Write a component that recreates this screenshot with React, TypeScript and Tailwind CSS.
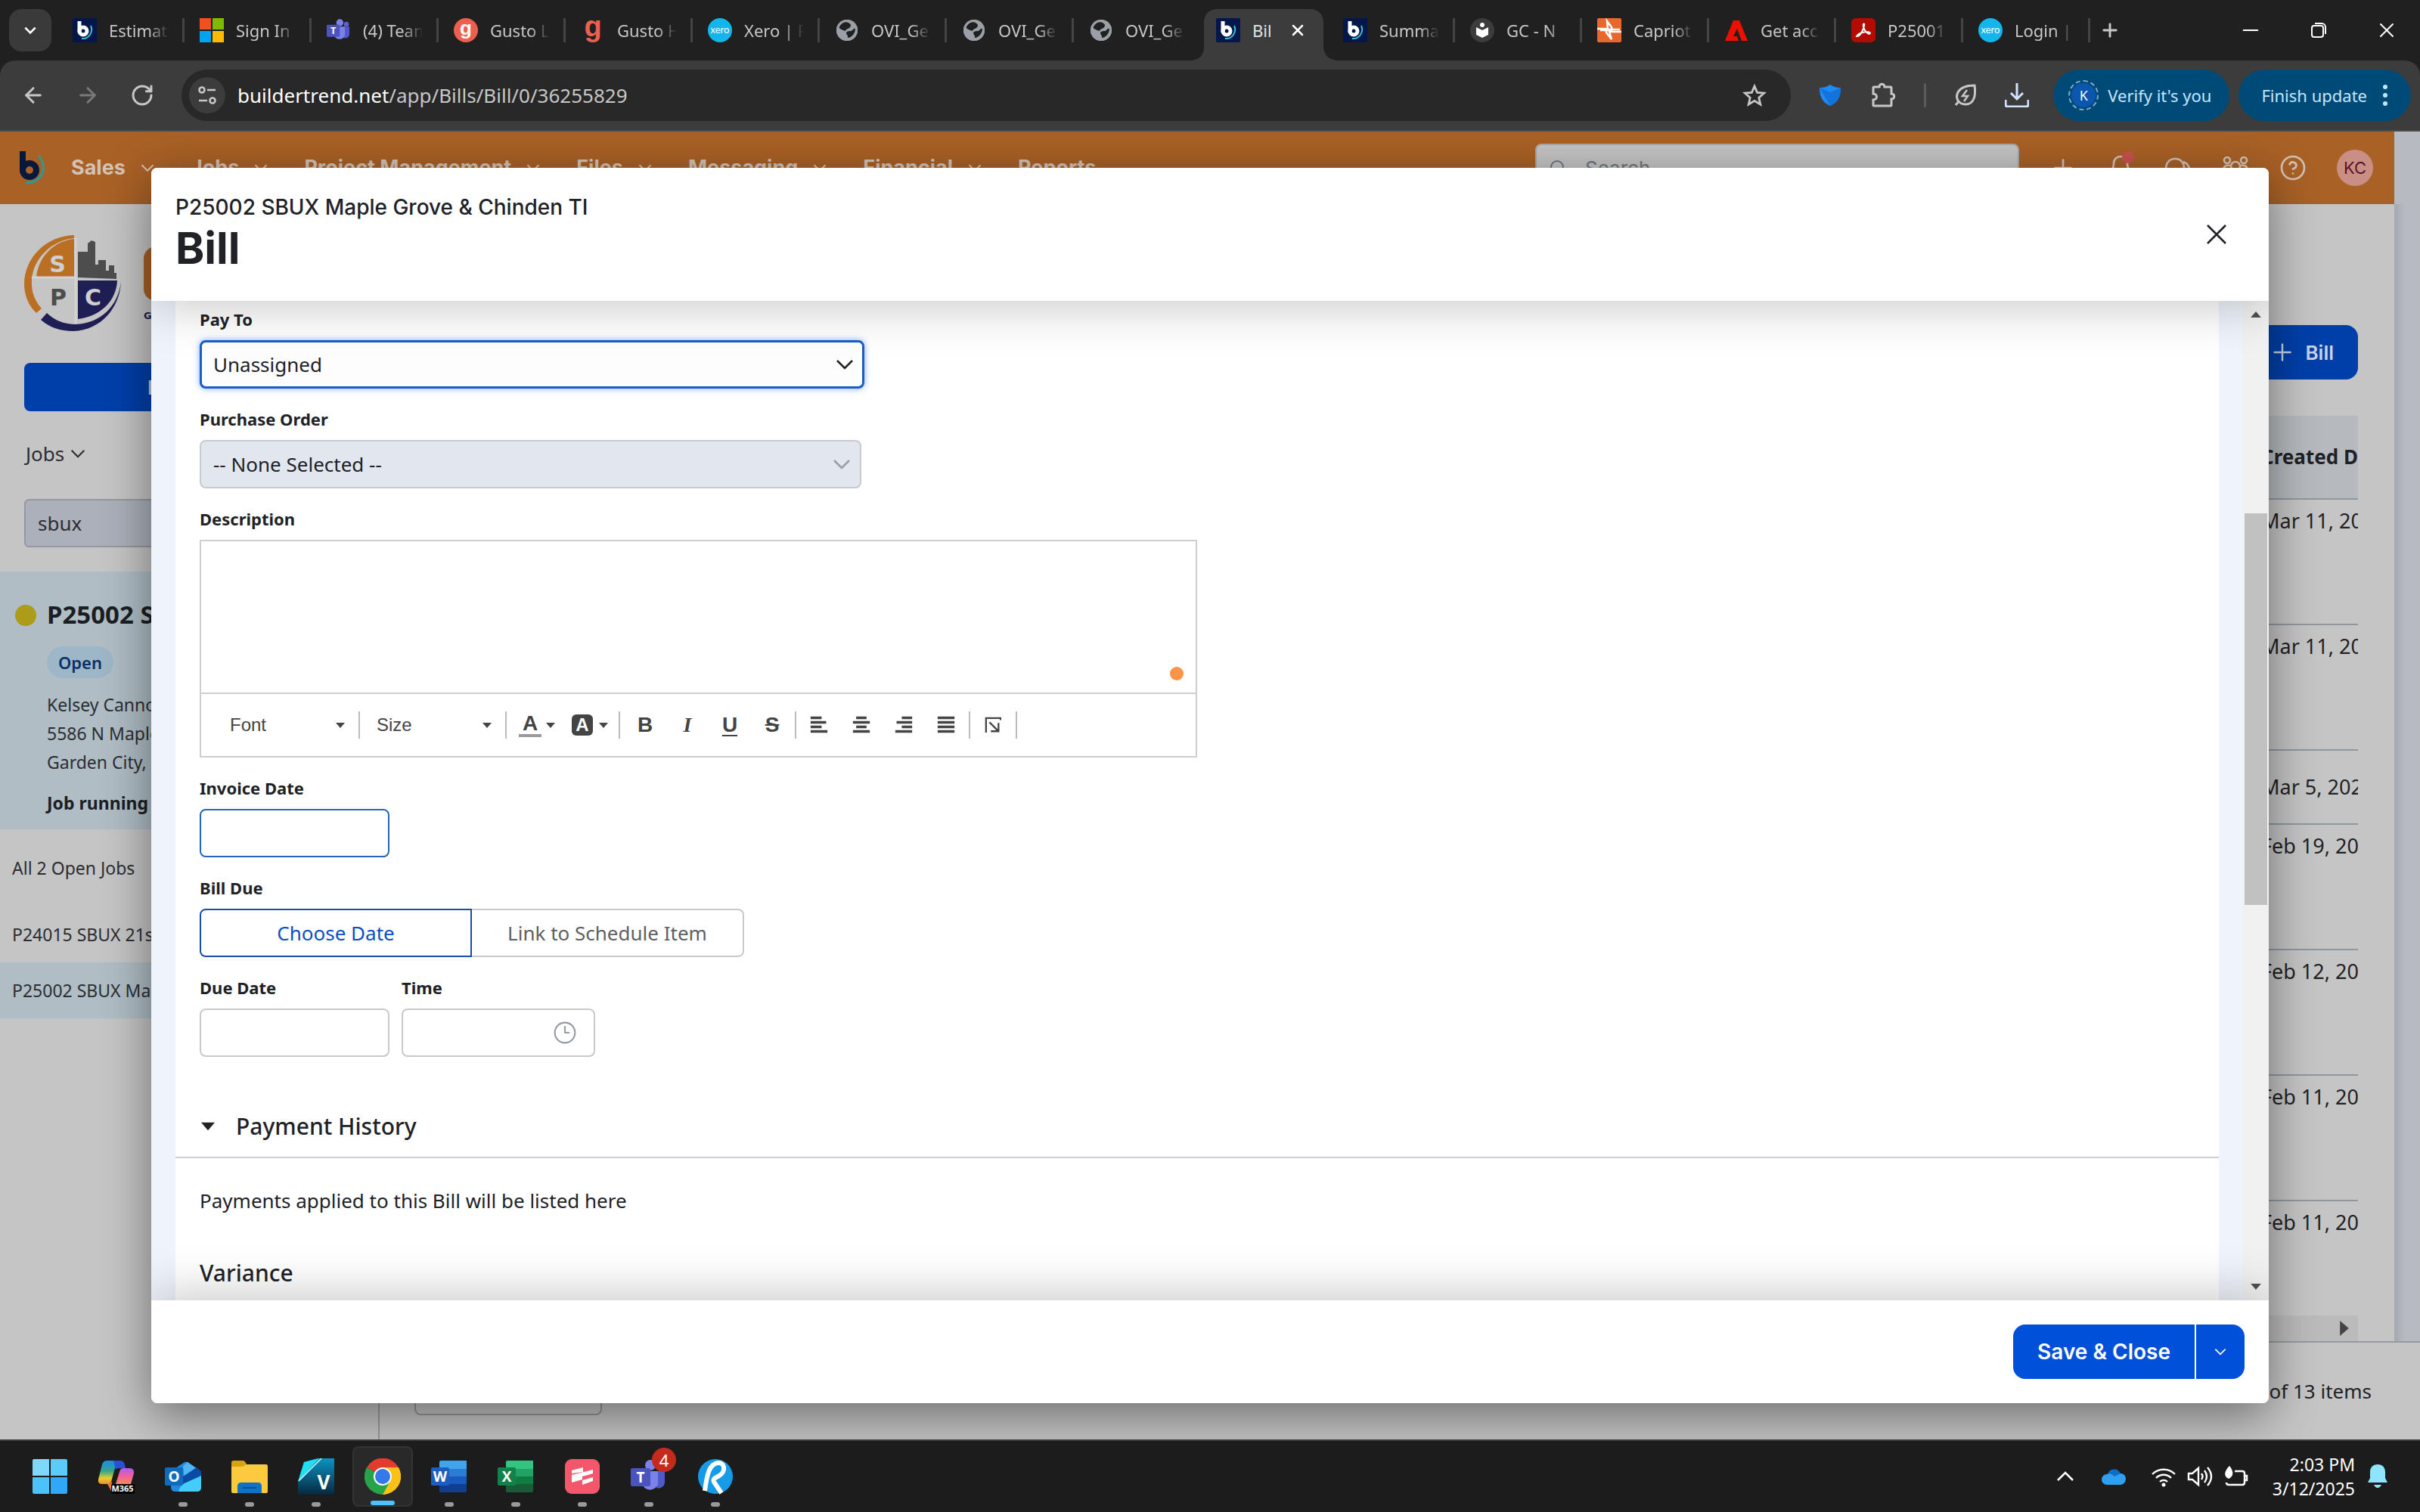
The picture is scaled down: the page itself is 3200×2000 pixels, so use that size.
import { useState } from "react";
import type { ReactNode } from "react";
import { ArrowLeft, ArrowRight, Bell, CircleHelp, Clock3, Minus, Plus, RotateCw, Search, X } from "lucide-react";

const Chevron = ({ className }: { className: string }) => (
	<svg viewBox="0 0 24 24" className={className} fill="none" stroke="currentColor" strokeWidth="2.6">
		<path d="M2 7l10 10L22 7" />
	</svg>
);

const Caret = ({ className }: { className: string }) => (
	<svg viewBox="0 0 12 7" className={className} fill="currentColor">
		<path d="M0 0h12L6 7z" />
	</svg>
);

/* ---------- browser tabs ---------- */

const BuilderIcon = () => (
	<svg viewBox="0 0 32 32" className="size-8">
		<rect width="32" height="32" rx="2" fill="#04174a" />
		<path d="M24 10a12 12 0 0 1-12 17" fill="none" stroke="#3ac0d8" strokeWidth="2" />
		<path d="M9 4v15" stroke="#fff" strokeWidth="5" />
		<circle cx="14" cy="17" r="5" fill="none" stroke="#fff" strokeWidth="5" />
	</svg>
);

const MicrosoftIcon = () => (
	<svg viewBox="0 0 32 32" className="size-8">
		<path fill="#f25022" d="M0 0h15v15H0z" />
		<path fill="#7fba00" d="M17 0h15v15H17z" />
		<path fill="#00a4ef" d="M0 17h15v15H0z" />
		<path fill="#ffb900" d="M17 17h15v15H17z" />
	</svg>
);

const TeamsIcon = ({ className }: { className: string }) => (
	<svg viewBox="0 0 48 48" className={className}>
		<circle cx="39" cy="12" r="5" fill="#5b62c9" />
		<circle cx="26" cy="9" r="7" fill="#7b83eb" />
		<path d="M32 17h13v15a8 8 0 0 1-11 7z" fill="#5059c9" />
		<path d="M15 17h21v17a11 11 0 0 1-21 0z" fill="#7b83eb" />
		<rect y="13" width="26" height="24" rx="2" fill="#4b53bc" />
		<text x="13" y="32" textAnchor="middle" fontSize="19" fontWeight="700" fontFamily="Open Sans, sans-serif" fill="#fff">T</text>
	</svg>
);

const GustoIcon = ({ plain }: { plain?: boolean }) => (
	<svg viewBox="0 0 32 32" className="size-8">
		{!plain && <circle cx="16" cy="16" r="16" fill="#ee5f50" />}
		<text
			x="16"
			y={plain ? 24 : 22}
			textAnchor="middle"
			fontSize={plain ? 38 : 26}
			fontWeight="700"
			fontFamily="Liberation Sans, sans-serif"
			fill={plain ? "#ee5f50" : "#fff"}
		>
			g
		</text>
	</svg>
);

const XeroIcon = () => (
	<svg viewBox="0 0 32 32" className="size-8">
		<circle cx="16" cy="16" r="16" fill="#13b5ea" />
		<text x="16" y="20" textAnchor="middle" fontSize="13" fontFamily="Lato, sans-serif" fill="#fff">xero</text>
	</svg>
);

const GlobeIcon = () => (
	<svg viewBox="0 0 32 32" className="size-8">
		<circle cx="16" cy="16" r="14" fill="#9aa0a6" />
		<path d="M14 5c7 1 9 5 5 8-3 2-4 1-5 4-3-1-7-2-9-5C6 8 9 5 14 5zM27 14c0 6-5 12-10 12 1-4-4-5-1-8 3-2 5 0 7-2 1-1 2-3 4-2z" fill="#202020" />
		<circle cx="16" cy="16" r="12.5" fill="none" stroke="#9aa0a6" strokeWidth="3" />
	</svg>
);

const ReaderIcon = () => (
	<svg viewBox="0 0 32 32" className="size-8">
		<circle cx="16" cy="16" r="16" fill="#3c3c3c" />
		<circle cx="16" cy="9" r="3" fill="#fff" />
		<path d="M8 12l8 4 8-4v10l-8 4-8-4z" fill="#fff" />
	</svg>
);

const CapriottiIcon = () => (
	<svg viewBox="0 0 32 32" className="size-8">
		<rect width="32" height="32" rx="2" fill="#e8672c" />
		<path d="M0 14h14L13 4l6 8v4H4M32 18H16l3 10-7-9v-4h18" fill="none" stroke="#fff" strokeWidth="2.5" />
	</svg>
);

const AdobeIcon = () => (
	<svg viewBox="0 0 32 32" className="size-8">
		<path d="M12 3h8l11 27h-8l-6-16-5 10h5l2 6H1z" fill="#eb1000" />
	</svg>
);

const AcrobatIcon = () => (
	<svg viewBox="0 0 32 32" className="size-8">
		<rect width="32" height="32" rx="6" fill="#b30b00" />
		<path d="M7 24c2-4 7-5 12-6 3 0 6 0 6 2-2 3-8-3-9-9-1-4 2-5 1-1-1 6-6 15-10 14z" fill="none" stroke="#fff" strokeWidth="2" />
	</svg>
);

const tabs: { title: string; icon: ReactNode; active?: boolean }[] = [
	{ title: "Estimate", icon: <BuilderIcon /> },
	{ title: "Sign In", icon: <MicrosoftIcon /> },
	{ title: "(4) Team", icon: <TeamsIcon className="size-8" /> },
	{ title: "Gusto L", icon: <GustoIcon /> },
	{ title: "Gusto H", icon: <GustoIcon plain /> },
	{ title: "Xero | P", icon: <XeroIcon /> },
	{ title: "OVI_Ge", icon: <GlobeIcon /> },
	{ title: "OVI_Ge", icon: <GlobeIcon /> },
	{ title: "OVI_Ge", icon: <GlobeIcon /> },
	{ title: "Bill", icon: <BuilderIcon />, active: true },
	{ title: "Summa", icon: <BuilderIcon /> },
	{ title: "GC - N", icon: <ReaderIcon /> },
	{ title: "Capriot", icon: <CapriottiIcon /> },
	{ title: "Get acc", icon: <AdobeIcon /> },
	{ title: "P25001", icon: <AcrobatIcon /> },
	{ title: "Login |", icon: <XeroIcon /> },
];

function TabStrip() {
	return (
		<div className="flex h-20 shrink-0 items-center bg-[#202020] pl-3 text-[#c7c7c7]">
			<button className="flex h-14 w-14 items-center justify-center rounded-2xl bg-[#3a3a3a]" aria-label="Search tabs">
				<Chevron className="size-4 stroke-[4] text-white" />
			</button>
			<div className="flex h-full flex-1 items-end pl-3">
				{tabs.map((tab, i) => (
					<div
						key={i}
						className={`relative flex h-[68px] w-[168px] items-center gap-4 pr-4 pb-3 pl-4 ${tab.active ? "z-10" : ""}`}
					>
						{tab.active && (
							<svg viewBox="0 0 200 68" className="absolute top-0 -left-5 h-[68px] w-[200px]">
								<path d="M0 68c16 0 20-8 20-20V18C20 8 26 0 38 0h122c12 0 18 8 18 18v30c0 12 6 20 22 20z" fill="#3c3c3c" />
							</svg>
						)}
						<span className="relative shrink-0">{tab.icon}</span>
						{tab.active ? (
							<>
								<span className="relative w-6 overflow-hidden text-[22px] leading-8 whitespace-nowrap text-[#e3e3e3]">{tab.title}</span>
								<button className="relative ml-2" aria-label="Close tab">
									<X className="size-6 text-white" strokeWidth={2.5} />
								</button>
							</>
						) : (
							<span className="flex-1 overflow-hidden [mask-image:linear-gradient(to_right,black_60%,transparent_90%)] text-[22px] leading-8 whitespace-nowrap">
								{tab.title}
							</span>
						)}
						{!tab.active && i !== 8 && <span className="absolute top-3 right-1 h-8 w-[3px] bg-[#444444]" />}
					</div>
				))}
				<button className="mb-[26px] ml-2" aria-label="New tab">
					<Plus className="size-7" strokeWidth={2.5} />
				</button>
			</div>
			<div className="flex items-center gap-16 pr-7 text-white">
				<button aria-label="Minimize">
					<Minus className="size-8" strokeWidth={1.5} />
				</button>
				<button aria-label="Restore">
					<svg viewBox="0 0 20 20" className="size-5" fill="none" stroke="currentColor" strokeWidth="2">
						<rect x="1" y="4" width="15" height="15" rx="3" />
						<path d="M5 1h9a5 5 0 0 1 5 5v9" />
					</svg>
				</button>
				<button aria-label="Close">
					<X className="size-8" strokeWidth={1.5} />
				</button>
			</div>
		</div>
	);
}

function AddressBar() {
	return (
		<div className="shrink-0 bg-[#202020]">
			<div className="flex h-[94px] items-center rounded-t-[20px] border-b-2 border-[#4b4b4b] bg-[#3c3c3c] pr-3 pl-7 text-[#c7c7c7]">
				<div className="flex gap-10">
					<button aria-label="Back">
						<ArrowLeft className="size-8" strokeWidth={2.2} />
					</button>
					<button aria-label="Forward" className="text-[#7a7a7a]">
						<ArrowRight className="size-8" strokeWidth={2.2} />
					</button>
					<button aria-label="Reload">
						<RotateCw className="size-8" strokeWidth={2.2} />
					</button>
				</div>
				<div className="ml-9 flex h-[68px] flex-1 items-center rounded-full bg-[#282828] pr-8 pl-[10px]">
					<button aria-label="Site information" className="flex size-12 items-center justify-center rounded-full bg-[#3c3c3c]">
						<svg viewBox="0 0 24 24" className="size-6" fill="none" stroke="currentColor" strokeWidth="2.6">
							<circle cx="5" cy="5" r="3.5" />
							<circle cx="19" cy="19" r="3.5" />
							<path d="M12 5h11M1 19h11" />
						</svg>
					</button>
					<p className="ml-4 flex-1 text-[26px]">
						<span className="text-white">buildertrend.net</span>/app/Bills/Bill/0/36255829
					</p>
					<button aria-label="Bookmark">
						<svg viewBox="0 0 32 32" className="size-8" fill="none" stroke="currentColor" strokeWidth="2.8">
							<path d="M16 4l3.600 8.400 9 .8-6.800 6 2 8.800-7.800-4.700L8.200 28l2-8.800-6.800-6 9-.8z" />
						</svg>
					</button>
				</div>
				<div className="ml-9 flex items-center gap-9">
					<svg viewBox="0 0 30 28" className="h-7 w-8">
						<path d="M1 4c6 0 9-1 14-4 5 3 8 4 14 4 0 11-3 19-14 24C4 23 1 15 1 4z" fill="#1d8bf8" />
						<path d="M1 4l14 6 14-6c0 11-3 19-14 24z" fill="#1273dc" />
					</svg>
					<svg viewBox="0 0 36 36" className="size-9" fill="none" stroke="currentColor" strokeWidth="3">
						<path d="M5 8q0-1 1-1h7c0-5 7-5 7 0h8q1 0 1 1v8c5 0 5 7 0 7v8q0 1-1 1H6q-1 0-1-1v-7c6 0 6-8 0-8z" />
					</svg>
					<span className="h-8 w-[3px] rounded bg-[#5c5c5c]" />
					<svg viewBox="0 0 32 32" className="size-8" fill="none" stroke="currentColor" strokeWidth="3">
						<path d="M28 3c2 14-1 25-12 25C7 28 2 20 6 12c4-7 12-9 22-9zM7 24l-4 5" />
						<path d="M18 9l-6 8h7l-5 7" strokeWidth="2.5" />
					</svg>
					<svg viewBox="0 0 32 32" className="size-8 text-[#d3e3fd]" fill="none" stroke="currentColor" strokeWidth="3">
						<path d="M16 0v20M8 13l8 8 8-8M1 22v6q0 3 3 3h24q3 0 3-3v-6" />
					</svg>
				</div>
				<button className="ml-8 flex h-[68px] items-center gap-3 rounded-full bg-[#004a77] pr-6 pl-5 text-[22px] text-[#c2e7ff]">
					<span className="flex size-10 items-center justify-center rounded-full border-2 border-dashed border-[#7fa9c6]">
						<span className="flex size-8 items-center justify-center rounded-full bg-[#0b57b0] text-[18px] text-white">K</span>
					</span>
					Verify it&apos;s you
				</button>
				<button className="ml-3 flex h-[68px] items-center gap-5 rounded-full bg-[#004a77] pr-[30px] pl-[30px] text-[22px] text-[#c2e7ff]">
					Finish update
					<svg viewBox="0 0 8 28" className="h-7 w-2" fill="currentColor">
						<circle cx="4" cy="3" r="3" />
						<circle cx="4" cy="14" r="3" />
						<circle cx="4" cy="25" r="3" />
					</svg>
				</button>
			</div>
		</div>
	);
}

/* ---------- page behind the dialog ---------- */

const navItems = ["Sales", "Jobs", "Project Management", "Files", "Messaging", "Financial", "Reports"];

function AppHeader() {
	return (
		<header className="flex h-24 flex-1 items-center bg-[#a96126] pr-7 pl-6 font-['Inter',sans-serif] text-[#d3c3b7]">
			<svg viewBox="0 0 38 44" className="h-11 w-[38px]">
				<path d="M6 0v26" stroke="#06183b" strokeWidth="8" />
				<circle cx="15" cy="25" r="9" fill="none" stroke="#06183b" strokeWidth="8" />
				<path d="M27 6c12 14 7 35-17 36" fill="none" stroke="#2b9a94" strokeWidth="3" />
			</svg>
			<nav className="ml-8 flex gap-12 text-[27px] font-bold">
				{navItems.map((item) => (
					<a key={item} href="#" className="flex items-center gap-5">
						{item}
						{item !== "Reports" && <Chevron className="size-[18px]" />}
					</a>
				))}
			</nav>
			<label className="ml-auto flex h-16 w-[640px] items-center gap-6 rounded-lg border-2 border-[#a8a8a8] bg-[#c4c4c4] px-4 text-[#6f777e]">
				<Search className="size-6" strokeWidth={2} />
				<input className="min-w-0 flex-1 bg-transparent text-[26px] placeholder:text-[#6f777e]" placeholder="Search" aria-label="Search" />
			</label>
			<div className="ml-10 flex items-center gap-10">
				<Plus className="size-9" strokeWidth={1.8} />
				<span className="relative">
					<Bell className="size-9" strokeWidth={1.8} />
					<span className="absolute -top-1 right-0 size-4 rounded-full bg-[#c9524f]" />
				</span>
				<svg viewBox="0 0 36 36" className="size-9" fill="none" stroke="currentColor" strokeWidth="2.6">
					<path d="M4 26c-5-11 1-20 10-20s14 8 11 15-10 9-16 7l-7 2z" />
					<path d="M25 10c8 3 10 11 6 17l2 5-7-2" />
				</svg>
				<svg viewBox="0 0 36 36" className="size-9" fill="none" stroke="currentColor" strokeWidth="2.6">
					<circle cx="7" cy="8" r="4" />
					<circle cx="29" cy="8" r="4" />
					<circle cx="18" cy="16" r="6" />
					<path d="M2 22c0-6 3-8 9-7M34 22c0-6-3-8-9-7M7 33c0-14 22-14 22 0z" />
				</svg>
				<CircleHelp className="size-9" strokeWidth={1.8} />
				<span className="flex size-12 items-center justify-center rounded-full bg-[#c98f85] text-[22px] text-[#5c1226]">KC</span>
			</div>
		</header>
	);
}

const SpcLogo = () => (
	<svg viewBox="0 0 130 128" className="h-32 w-[130px] shrink-0">
		<path d="M66 1C28 2 0 32 0 66c0 14 6 29 16 38l7-6C14 88 9 76 10 60 12 32 36 8 66 5z" fill="#bb6f22" />
		<path d="M66 6v51H16C18 30 40 8 66 6z" fill="#bb6f22" />
		<path d="M71 57V23h13V12l5-4 5 2v30h4v-6h10v14h4v-7h7v10h3v8z" fill="#4d4d4d" />
		<path d="M71 61h52c-1 28-24 48-52 51z" fill="#201f55" />
		<path d="M30 104l-8 9c11 10 26 15 43 15 37-1 62-32 63-66-3 32-27 56-60 57-14 0-28-5-38-15z" fill="#201f55" />
		<path d="M10 57h58M68 5v113" stroke="#d3d3d3" strokeWidth="3" />
		<g fontFamily="DejaVu Sans, sans-serif" fontWeight="700" fontSize="30" textAnchor="middle">
			<text x="44" y="50" fill="#d0d0d0">S</text>
			<text x="45" y="94" fill="#4d4d4d">P</text>
			<text x="91" y="94" fill="#d0d0d0">C</text>
		</g>
	</svg>
);

function Sidebar() {
	return (
		<aside className="flex w-[502px] shrink-0 flex-col border-r-2 border-[#9a9a9a] text-[23px] text-[#2b2e32]">
			<div className="flex gap-7 pt-10 pl-8">
				<SpcLogo />
				<div className="flex-1 pt-4">
					<div className="h-[72px] rounded-l-2xl bg-[#a96126]" />
					<p className="mt-3 font-['DejaVu_Sans',sans-serif] text-[13px] leading-4 font-bold text-[#201f55]">GENERAL CONTRACTING</p>
				</div>
			</div>
			<button className="mx-8 mt-[42px] h-16 rounded-lg bg-[#003fa9] font-['Inter',sans-serif] text-[26px] font-semibold text-[#c5cfe0]">
				New Job
			</button>
			<button className="mt-[38px] ml-[34px] flex items-center gap-2 text-[26px] leading-9">
				Jobs
				<Chevron className="size-5" />
			</button>
			<input
				className="mx-8 mt-[42px] h-16 rounded-md border-2 border-[#95989e] bg-[#abb0ba] px-4 text-[26px]"
				defaultValue="sbux"
				aria-label="Filter jobs"
			/>
			<section className="mt-8 flex gap-[14px] bg-[#b0bdc5] pt-[34px] pb-4 pl-5">
				<span className="mt-[10px] size-7 shrink-0 rounded-full bg-[#ac9c1a]" />
				<div>
					<h2 className="text-[33px] leading-[46px] font-bold whitespace-nowrap text-[#1b1f24]">P25002 SBUX Maple Grove</h2>
					<span className="mt-[19px] inline-block rounded-full bg-[#9db7c8] px-[15px] text-[22px] leading-[42px] font-semibold text-[#0a2f66]">
						Open
					</span>
					<p className="mt-4 leading-[38px] whitespace-pre-line">{"Kelsey Cannon\n5586 N Maple Grove Rd\nGarden City, ID 83714"}</p>
					<p className="mt-4 leading-[38px] font-bold text-[#1b1f24]">Job running total</p>
				</div>
			</section>
			<p className="mt-8 pl-4 leading-[38px]">All 2 Open Jobs</p>
			<a href="#" className="mt-8 pl-4 leading-[74px] whitespace-nowrap">
				P24015 SBUX 21st Street
			</a>
			<a href="#" className="bg-[#b0bdc5] pl-4 leading-[74px] whitespace-nowrap">
				P25002 SBUX Maple Grove
			</a>
		</aside>
	);
}

const createdDates = [
	"Mar 11, 2025",
	"Mar 11, 2025",
	"Mar 5, 2025",
	"Feb 19, 2025",
	"Feb 12, 2025",
	"Feb 11, 2025",
	"Feb 11, 2025",
];

function BillsPage() {
	return (
		<div className="flex h-full flex-col bg-[#c5c5c5]">
			<div className="flex shrink-0">
				<AppHeader />
				<div className="w-[34px] bg-[#b7bac0]" />
			</div>
			<div className="flex min-h-0 flex-1">
				<Sidebar />
				<main className="flex min-w-0 flex-1 flex-col text-[26px] text-[#1f2226]">
					<div className="flex min-h-0 flex-1">
						<div className="flex min-w-0 flex-1 flex-col px-12 pt-40">
							<button className="flex h-[72px] items-center gap-3 self-end rounded-2xl bg-[#003fa9] px-8 font-['Inter',sans-serif] text-[26px] font-semibold text-[#c9d3e6]">
								<Plus className="size-9" strokeWidth={1.6} />
								Bill
							</button>
							<div className="mt-12 min-h-0 flex-1 overflow-hidden">
								<table className="w-full table-fixed">
									<thead>
										<tr className="h-[110px] border-b-2 border-[#8f979f] bg-[#b6babe]">
											<th />
											<th className="w-[128px] overflow-hidden text-left whitespace-nowrap">Created Date</th>
										</tr>
									</thead>
									<tbody>
										{createdDates.map((date, i) => {
											const single = date.startsWith("Mar 5");
											return (
												<tr key={i} className={`border-b-2 border-[#8f979f] ${single ? "h-[98px]" : "h-[166px] align-top"}`}>
													<td />
													<td className={`overflow-hidden text-[27px] leading-9 whitespace-nowrap ${single ? "" : "pt-[10px]"}`}>{date}</td>
												</tr>
											);
										})}
									</tbody>
								</table>
							</div>
							<div className="flex h-[34px] shrink-0 items-center justify-end bg-[#bbbbbb] pr-2">
								<Caret className="h-3 w-5 -rotate-90 text-[#444444]" />
							</div>
						</div>
						<div className="w-[34px] bg-linear-to-r from-[#a4a8b1] to-[#b7bac0] to-40%" />
					</div>
					<footer className="flex h-[130px] shrink-0 items-center justify-between border-t-2 border-[#959ba3] pr-16 pl-[46px]">
						<select className="mb-8 h-16 w-[248px] appearance-none self-end rounded-lg border-2 border-[#959595] px-4" aria-label="Page size">
							<option>50 per page</option>
						</select>
						<span>1-13 of 13 items</span>
					</footer>
				</main>
			</div>
		</div>
	);
}

/* ---------- bill dialog ---------- */

const labelClass = "mb-3 block text-[22px] leading-8 font-bold text-[#202227]";
const fieldClass = "h-16 rounded-lg border-2 border-[#c9c9cb] bg-white px-4 text-[26px] text-[#202227] outline-none";

function EditorToolbar() {
	const glyph = "flex h-11 w-14 items-center justify-center text-[28px] leading-none font-bold";
	const lines = [
		["Align left", "M1 3h17M1 10h24M1 17h17M1 24h26"],
		["Align center", "M6 3h16M1 10h26M6 17h16M1 24h26"],
		["Align right", "M11 3h16M3 10h24M11 17h16M1 24h26"],
		["Justify", "M1 3h26M1 10h26M1 17h26M1 24h26"],
	];
	return (
		<div className="flex h-[84px] items-center border-t-2 border-[#cfcfcf] pl-[38px] font-['Liberation_Sans',sans-serif] text-[24px] text-[#444444]">
			<button type="button" className="flex w-[152px] items-center justify-between">
				Font
				<Caret className="w-3" />
			</button>
			<span className="mr-[22px] ml-[18px] h-9 w-[2px] bg-[#bcbcbc]" />
			<button type="button" className="flex w-[152px] items-center justify-between">
				Size
				<Caret className="w-3" />
			</button>
			<span className="mr-4 ml-[18px] h-9 w-[2px] bg-[#bcbcbc]" />
			<button type="button" className="flex items-center gap-[6px]" aria-label="Text color">
				<span className="w-[30px] border-b-4 border-[#9b9b9b] text-center text-[28px] leading-[28px] font-bold">A</span>
				<Caret className="w-3" />
			</button>
			<button type="button" className="ml-[22px] flex items-center gap-2" aria-label="Highlight color">
				<span className="flex size-7 items-center justify-center rounded-md bg-[#444444] text-[24px] leading-none font-bold text-white">A</span>
				<Caret className="w-3" />
			</button>
			<span className="mr-[5px] ml-[14px] h-9 w-[2px] bg-[#bcbcbc]" />
			<button type="button" className={glyph} aria-label="Bold">B</button>
			<button type="button" className={`${glyph} font-['Liberation_Serif',serif] italic`} aria-label="Italic">I</button>
			<button type="button" className={`${glyph} underline underline-offset-4`} aria-label="Underline">U</button>
			<button type="button" className={`${glyph} line-through`} aria-label="Strikethrough">S</button>
			<span className="mx-[2px] h-9 w-[2px] bg-[#bcbcbc]" />
			{lines.map(([name, d]) => (
				<button type="button" key={name} className={glyph} aria-label={name}>
					<svg viewBox="0 0 28 27" className="w-6" stroke="currentColor" strokeWidth="4">
						<path d={d} />
					</svg>
				</button>
			))}
			<span className="mx-[2px] h-9 w-[2px] bg-[#bcbcbc]" />
			<button type="button" className={glyph} aria-label="Insert">
				<svg viewBox="0 0 24 24" className="size-[22px]" fill="none" stroke="currentColor" strokeWidth="2.5">
					<path d="M2 23V2h21v3M7 8l12 12M20 9v12H9" />
				</svg>
			</button>
			<span className="mx-[2px] h-9 w-[2px] bg-[#bcbcbc]" />
		</div>
	);
}

function BillForm() {
	const [dueMode, setDueMode] = useState("date");
	return (
		<form className="min-w-0 flex-1 bg-white pt-2">
			<div className="flex flex-col gap-6 pl-8">
				<div>
					<label htmlFor="payTo" className={labelClass}>Pay To</label>
					<div className="relative w-[879px]">
						<select
							id="payTo"
							className="h-16 w-full appearance-none rounded-lg border-[3px] border-[#1a5dc4] bg-[#fdfdfd] px-[15px] text-[26px] text-[#202227] shadow-[0_0_8px_rgba(0,90,255,0.5)] outline-none"
						>
							<option>Unassigned</option>
						</select>
						<Chevron className="pointer-events-none absolute top-5 right-[14px] size-6 text-[#202227]" />
					</div>
				</div>
				<div>
					<label htmlFor="purchaseOrder" className={labelClass}>Purchase Order</label>
					<div className="relative w-[875px]">
						<select
							id="purchaseOrder"
							disabled
							className="h-16 w-full appearance-none rounded-lg border-2 border-[#c8cacf] bg-[#e1e6ef] px-4 text-[26px] text-[#202227] opacity-100"
						>
							<option>-- None Selected --</option>
						</select>
						<Chevron className="pointer-events-none absolute top-5 right-[14px] size-6 text-[#9a9da3]" />
					</div>
				</div>
				<div>
					<label htmlFor="description" className={labelClass}>Description</label>
					<div className="w-[1319px] border-2 border-[#cfcfcf]">
						<div className="relative">
							<textarea id="description" className="block h-[200px] w-full resize-none p-4 text-[26px] outline-none" />
							<span className="absolute right-4 bottom-4 size-[18px] rounded-full bg-[#fa9449]" />
						</div>
						<EditorToolbar />
					</div>
				</div>
				<div>
					<label htmlFor="invoiceDate" className={labelClass}>Invoice Date</label>
					<input id="invoiceDate" className="h-16 w-[251px] rounded-lg border-2 border-[#2565bd] px-4 text-[26px] outline-none" />
				</div>
				<fieldset>
					<legend className={labelClass}>Bill Due</legend>
					<div className="flex text-[26px] text-[#5f6063]">
						<label className="flex h-16 w-[360px] items-center justify-center rounded-l-lg border-2 border-[#c9c9cb] has-checked:border-[#164fa8] has-checked:text-[#0b4fc4]">
							<input type="radio" name="due" className="sr-only" checked={dueMode === "date"} onChange={() => setDueMode("date")} />
							Choose Date
						</label>
						<label className="flex h-16 w-[360px] items-center justify-center rounded-r-lg border-2 border-l-0 border-[#c9c9cb] has-checked:border-[#164fa8] has-checked:text-[#0b4fc4]">
							<input type="radio" name="due" className="sr-only" checked={dueMode === "schedule"} onChange={() => setDueMode("schedule")} />
							Link to Schedule Item
						</label>
					</div>
				</fieldset>
				<div className="flex gap-4">
					<div>
						<label htmlFor="dueDate" className={labelClass}>Due Date</label>
						<input id="dueDate" className={`${fieldClass} w-[251px]`} />
					</div>
					<div>
						<label htmlFor="dueTime" className={labelClass}>Time</label>
						<div className="relative">
							<input id="dueTime" className={`${fieldClass} w-[256px]`} />
							<Clock3 className="pointer-events-none absolute top-4 right-6 size-8 text-[#979ca4]" strokeWidth={1.6} />
						</div>
					</div>
				</div>
			</div>
			<h2 className="mt-[50px] border-b-2 border-[#ccd0d4] pt-[22px] pb-5 pl-[34px] text-[30px] leading-10 font-medium text-[#202227]">
				<button type="button" className="flex items-center gap-7">
					<Caret className="h-3 w-[18px]" />
					Payment History
				</button>
			</h2>
			<p className="mt-9 pl-8 text-[26px] leading-10 text-[#202227]">Payments applied to this Bill will be listed here</p>
			<h3 className="mt-14 pl-8 text-[30px] leading-10 font-medium text-[#202227]">Variance</h3>
		</form>
	);
}

function BillDialog() {
	return (
		<div
			role="dialog"
			aria-label="Bill"
			className="absolute inset-x-[200px] inset-y-12 flex flex-col overflow-hidden rounded-lg bg-white shadow-[0_16px_64px_rgba(0,0,0,0.45)]"
		>
			<header className="relative z-10 flex h-44 shrink-0 justify-between bg-white pr-14 pl-8 font-['Inter',sans-serif] text-[#202227] shadow-[0_8px_64px_rgba(0,0,0,0.22)]">
				<div className="pt-8">
					<p className="text-[28px] leading-10 font-medium">P25002 SBUX Maple Grove &amp; Chinden TI</p>
					<h1 className="text-[58px] leading-[68px] font-bold">Bill</h1>
				</div>
				<button aria-label="Close" className="self-center">
					<svg viewBox="0 0 26 26" className="size-[26px]" stroke="currentColor" strokeWidth="2.6">
						<path d="M1 1l24 24M25 1L1 25" />
					</svg>
				</button>
			</header>
			<div className="flex min-h-0 flex-1 overflow-hidden bg-[#eff3fb] pl-8">
				<BillForm />
				<div className="w-8" />
				<div className="flex w-[34px] flex-col items-center bg-[#f1f1f1] py-[14px]">
					<Caret className="h-2 w-4 rotate-180 text-[#505050]" />
					<div className="flex min-h-0 w-full flex-1 flex-col px-[2px] pt-[259px]">
						<div className="h-[518px] bg-[#c1c1c1]" />
					</div>
					<Caret className="h-2 w-4 text-[#505050]" />
				</div>
			</div>
			<footer className="relative z-10 flex h-[136px] shrink-0 items-center justify-end bg-white pr-8 font-['Inter',sans-serif] text-[28px] font-semibold text-white shadow-[0_-8px_64px_rgba(0,0,0,0.22)]">
				<button className="h-[72px] rounded-l-2xl bg-[#0050d9] px-8">Save &amp; Close</button>
				<button aria-label="More save options" className="ml-[2px] flex h-[72px] w-16 items-center justify-center rounded-r-2xl bg-[#0050d9]">
					<Chevron className="size-4" />
				</button>
			</footer>
		</div>
	);
}

/* ---------- taskbar ---------- */

const OfficeIcon = ({ letter, colors }: { letter: string; colors: string[] }) => (
	<svg viewBox="0 0 48 48" className="size-12">
		<path d="M11 5q0-2 2-2h34v11H11z" fill={colors[0]} />
		<path d="M11 14h36v10H11z" fill={colors[1]} />
		<path d="M11 24h36v10H11z" fill={colors[2]} />
		<path d="M11 34h36v9q0 2-2 2H13q-2 0-2-2z" fill={colors[3]} />
		<rect y="12" width="24" height="24" rx="2" fill={colors[4]} />
		<text x="12" y="31" textAnchor="middle" fontSize="19" fontWeight="700" fontFamily="Open Sans, sans-serif" fill="#fff">{letter}</text>
	</svg>
);

const taskbarApps: { name: string; icon: ReactNode; state?: "open" | "active" }[] = [
	{
		name: "Start",
		icon: (
			<svg viewBox="0 0 48 48" className="size-12">
				<path d="M1 3q0-2 2-2h20v22H1z" fill="#7fd8fb" />
				<path d="M25 1h20q2 0 2 2v20H25z" fill="#5ccbfa" />
				<path d="M1 25h22v22H3q-2 0-2-2z" fill="#4cc2fa" />
				<path d="M25 25h22v20q0 2-2 2H25z" fill="#2fa8f7" />
			</svg>
		),
	},
	{
		name: "Microsoft 365 Copilot",
		icon: (
			<svg viewBox="0 0 48 48" className="size-12">
				<defs>
					<linearGradient id="copilotLeft" x1="0" y1="0" x2="0" y2="1">
						<stop offset="0" stopColor="#1b8bea" />
						<stop offset="0.45" stopColor="#35a58a" />
						<stop offset="0.75" stopColor="#e8cf2c" />
						<stop offset="1" stopColor="#f28a2e" />
					</linearGradient>
					<linearGradient id="copilotRight" x1="0" y1="0" x2="0" y2="1">
						<stop offset="0" stopColor="#a95df0" />
						<stop offset="0.5" stopColor="#f0609a" />
						<stop offset="1" stopColor="#f58a5f" />
					</linearGradient>
				</defs>
				<path d="M11 3h16c-3 2-4 6-5 10l-5 18q-1 3-4 3H5q-6 0-5-6L5 8q2-5 6-5z" fill="url(#copilotLeft)" />
				<path d="M12 34q5 0 6-4v15z" fill="#f2743a" />
				<path d="M20 3h9c4 0 6 3 7 10h-7c-3 0-4 0-6 2-1-4-2-8-3-12z" fill="#2a50d8" />
				<path d="M33 13h9q6 1 5 7l-4 14H23l5-16q1-5 5-5z" fill="url(#copilotRight)" />
				<rect x="17" y="34" width="31" height="13" rx="2" fill="#000" />
				<text x="32" y="44" textAnchor="middle" fontSize="11" fontWeight="700" fontFamily="Open Sans, sans-serif" fill="#fff">M365</text>
			</svg>
		),
	},
	{
		name: "Outlook",
		state: "open",
		icon: (
			<svg viewBox="0 0 48 48" className="size-12">
				<path d="M8 17L26 5q2-1 4 0l16 11q2 1 2 4v18q0 6-6 6H14q-6 0-6-6z" fill="#2389dd" />
				<path d="M24 10l6-5 16 11-20 14z" fill="#4fb5f5" />
				<path d="M24 24l18-12 6 6v6L24 34z" fill="#0a4ba6" />
				<path d="M48 23v15q0 6-6 6H18q2-8 8-11z" fill="#45cdfa" />
				<rect y="12" width="24" height="24" rx="2" fill="#0f6cbd" />
				<text x="12" y="31" textAnchor="middle" fontSize="19" fontWeight="700" fontFamily="Open Sans, sans-serif" fill="#fff">O</text>
			</svg>
		),
	},
	{
		name: "File Explorer",
		state: "open",
		icon: (
			<svg viewBox="0 0 48 48" className="size-12">
				<path d="M0 6q0-3 3-3h12q3 0 5 5v8H0z" fill="#d9a20f" />
				<path d="M0 11h14q3 0 5-3h27q2 0 2 3v33q0 2-2 2H2q-2 0-2-2z" fill="#fdca3f" />
				<path d="M8 46V37q0-5 5-5h22q5 0 5 5v9z" fill="#1172c4" />
				<path d="M15 39h18" stroke="#0a4f94" strokeWidth="2" />
			</svg>
		),
	},
	{
		name: "Vectorworks",
		state: "open",
		icon: (
			<svg viewBox="0 0 48 48" className="size-12">
				<defs>
					<linearGradient id="vPanel" x1="0" y1="0" x2="0" y2="1">
						<stop offset="0" stopColor="#0b93c4" />
						<stop offset="1" stopColor="#07283f" />
					</linearGradient>
				</defs>
				<path d="M8 5L26 0h22v48H0V30z" fill="url(#vPanel)" />
				<path d="M8 5l20-5L0 31z" fill="#20dff2" />
				<path d="M31 0L1 30" stroke="#d9f8fc" strokeWidth="1.5" />
				<text x="34" y="41" textAnchor="middle" fontSize="26" fontWeight="700" fontFamily="Open Sans, sans-serif" fill="#fff">V</text>
			</svg>
		),
	},
	{
		name: "Chrome",
		state: "active",
		icon: (
			<svg viewBox="0 0 48 48" className="size-12">
				<path d="M24 24L3 12a24 24 0 0 1 42 0z" fill="#e33b2e" />
				<path d="M24 24l21-12a24 24 0 0 1-21 36z" fill="#fbc116" />
				<path d="M24 24L3 12a24 24 0 0 0 21 36l10-18z" fill="#27a349" />
				<path d="M24 12h21l-11 18z" fill="#fbc116" />
				<circle cx="24" cy="24" r="12" fill="#fff" />
				<circle cx="24" cy="24" r="10" fill="#3478ea" />
			</svg>
		),
	},
	{ name: "Word", state: "open", icon: <OfficeIcon letter="W" colors={["#41a5ee", "#2b7cd3", "#185abd", "#103f91", "#1d5cc0"]} /> },
	{ name: "Excel", state: "open", icon: <OfficeIcon letter="X" colors={["#33c481", "#21a366", "#107c41", "#185c37", "#14804a"]} /> },
	{
		name: "SketchUp",
		state: "open",
		icon: (
			<svg viewBox="0 0 48 48" className="size-12">
				<rect x="1" y="1" width="46" height="46" rx="9" fill="#f4566b" />
				<path d="M10 20v-4l15-4v6zM10 27v-5l28-7v5l-10 3zM24 35v-6l14-4v5zM10 27l14-4v5l-14 4z" fill="#fff" />
			</svg>
		),
	},
	{ name: "Teams", state: "open", icon: <TeamsIcon className="size-12" /> },
	{
		name: "Revu",
		state: "open",
		icon: (
			<svg viewBox="0 0 48 48" className="size-12">
				<circle cx="24" cy="24" r="23" fill="#159be8" />
				<path d="M10 43C13 20 16 8 27 6c10-1 11 12 2 17-4 3-9 3-7 8l10 15" fill="none" stroke="#fff" strokeWidth="6" />
			</svg>
		),
	},
];

function Taskbar() {
	return (
		<div className="flex h-24 shrink-0 items-center justify-between border-t-2 border-[#3b3b3b] bg-[#1c1c1c] pr-[42px] pl-[26px] text-white">
			<div className="flex gap-2">
				{taskbarApps.map((app) => (
					<button
						key={app.name}
						aria-label={app.name}
						className={`relative flex h-20 w-20 items-center justify-center rounded-lg ${app.state === "active" ? "border-2 border-[#333333] bg-[#292929]" : ""}`}
					>
						{app.icon}
						{app.state === "active" && <span className="absolute bottom-0 h-[6px] w-8 rounded-full bg-[#4cc2ff]" />}
						{app.state === "open" && <span className="absolute bottom-0 h-[6px] w-3 rounded-full bg-[#9a9a9a]" />}
						{app.name === "Teams" && (
							<span className="absolute top-[2px] right-1 flex size-8 items-center justify-center rounded-full bg-[#c42b1c] text-[22px] leading-none">4</span>
						)}
					</button>
				))}
			</div>
			<div className="flex items-center">
				<Chevron className="size-6 rotate-180" />
				<svg viewBox="0 0 32 22" className="ml-9 w-8">
					<path d="M8 8a9 9 0 0 1 17-1l-8 10H6z" fill="#0f6cc4" />
					<path d="M7 8c4-2 7 0 10 3l8-4c4 0 7 3 7 7s-3 8-7 8H7a7 7 0 0 1 0-14z" fill="#2f9ff0" />
				</svg>
				<svg viewBox="0 0 36 36" className="ml-8 w-9" fill="none" stroke="currentColor" strokeWidth="2.4">
					<path d="M3 15a21 21 0 0 1 30 0M8 20a14 14 0 0 1 20 0M13 25a7 7 0 0 1 10 0" />
					<circle cx="18" cy="29" r="2.5" fill="currentColor" stroke="none" />
				</svg>
				<svg viewBox="0 0 36 36" className="ml-3 w-9" fill="none" stroke="currentColor" strokeWidth="2.4">
					<path d="M3 14h5l8-7v22l-8-7H3zM20 14q3 4 0 8M24 10q6 8 0 16M28 6q10 12 0 24" />
				</svg>
				<svg viewBox="0 0 34 28" className="ml-3 w-[34px]" fill="none" stroke="currentColor" strokeWidth="2.5">
					<path d="M16 7h10q3 0 3 3v12q0 3-3 3H8q-3 0-3-3M30 13h2v6h-2" />
					<path d="M9 0c6 7 6 14-1 17-7-3-6-10 1-17zM2 22l5-6" fill="currentColor" stroke="none" />
				</svg>
				<div className="ml-8 text-right text-[23px] leading-8">
					<p>2:03 PM</p>
					<p>3/12/2025</p>
				</div>
				<svg viewBox="0 0 28 32" className="ml-4 w-7" fill="#8fe5ff">
					<path d="M14 0c6 0 10 4 10 10v8l3 6H1l3-6v-8C4 4 8 0 14 0zM9 27h10q-2 4-5 4t-5-4z" />
				</svg>
			</div>
		</div>
	);
}

export default function App() {
	return (
		<div className="flex h-screen flex-col overflow-hidden font-['Noto_Sans','Open_Sans',sans-serif]">
			<TabStrip />
			<AddressBar />
			<div className="relative min-h-0 flex-1 overflow-hidden">
				<BillsPage />
				<BillDialog />
			</div>
			<Taskbar />
		</div>
	);
}
